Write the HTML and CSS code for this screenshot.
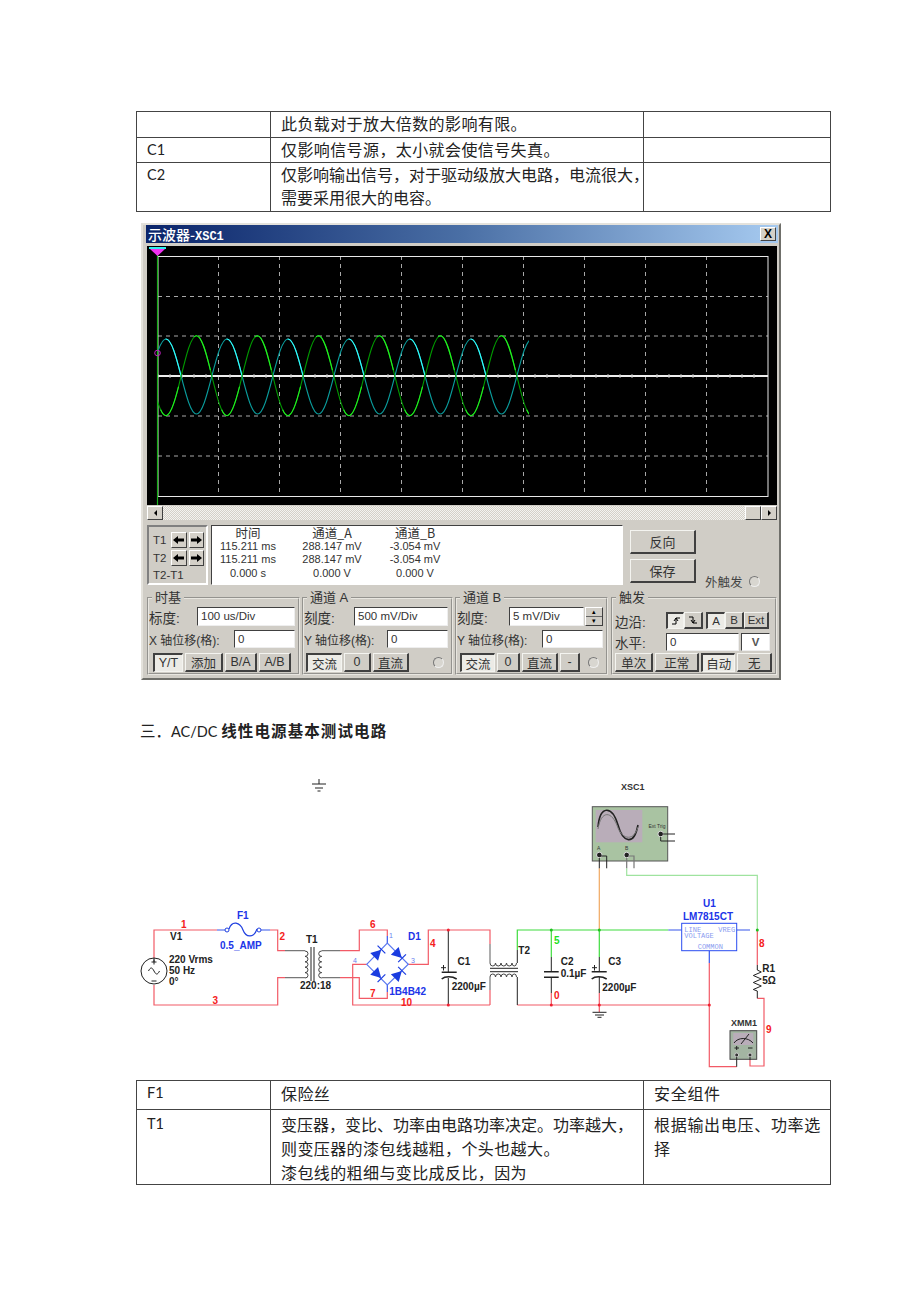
FILE: index.html
```html
<!DOCTYPE html>
<html lang="zh">
<head>
<meta charset="utf-8">
<title>AC/DC</title>
<link rel="stylesheet" href="styles.css">
</head>
<body>
<main class="page">
<table class="doc">
  <colgroup><col class="c1"><col class="c2"><col class="c3"></colgroup>
  <tr><td></td><td>此负载对于放大倍数的影响有限。</td><td></td></tr>
  <tr class="slim"><td class="lat">C1</td><td>仅影响信号源，太小就会使信号失真。</td><td></td></tr>
  <tr><td class="lat">C2</td><td><span class="tight">仅影响输出信号，对于驱动级放大电路，电流很大，</span><br><span class="tight">需要采用很大的电容。</span></td><td></td></tr>
</table>

<section class="scope">
  <div class="title"><span>示波器-<b class="mono">XSC1</b></span><span class="close">X</span></div>
  <svg class="screen" viewBox="147 246 630 259" width="630" height="259">
    <defs>
      <path id="pc" d="M0 0c4.97-19.2 9.73-37.5 15.25-37.5c5.52 0 10.28 18.3 15.25 37.5c4.97 19.2 9.73 37.5 15.25 37.5c5.52 0 10.28-18.3 15.25-37.5"/>
      <path id="pg" d="M0 0c4.97-20.5 9.73-40 15.25-40c5.52 0 10.28 19.5 15.25 40c4.97 20.5 9.73 40 15.25 40c5.52 0 10.28-19.5 15.25-40"/>
      <clipPath id="waveclip"><rect x="158" y="300" width="371" height="150"/></clipPath>
      <g id="cyanrun"><use href="#pc" x="150.75" y="376.5"/><use href="#pc" x="211.75" y="376.5"/><use href="#pc" x="272.75" y="376.5"/><use href="#pc" x="333.75" y="376.5"/><use href="#pc" x="394.75" y="376.5"/><use href="#pc" x="455.75" y="376.5"/><use href="#pc" x="516.75" y="376.5"/></g>
      <g id="greenrun"><use href="#pg" x="120.25" y="375.7"/><use href="#pg" x="181.25" y="375.7"/><use href="#pg" x="242.25" y="375.7"/><use href="#pg" x="303.25" y="375.7"/><use href="#pg" x="364.25" y="375.7"/><use href="#pg" x="425.25" y="375.7"/><use href="#pg" x="486.25" y="375.7"/></g>
    </defs>
    <rect x="147" y="246" width="630" height="259" fill="#000"/>
    <path class="grid" d="M218.5 256V496M279.5 256V496M340.5 256V496M401.5 256V496M462.5 256V496M523.5 256V496M584.5 256V496M645.5 256V496M706.5 256V496M158 296.5H768M158 336H768M158 416H768M158 456H768"/>
    <rect x="158" y="256.5" width="610" height="240" fill="none" stroke="#e8e8e8"/>
    <path d="M158 376H768" stroke="#eee" stroke-width="2"/>
    <path class="ticks" d="M158 374V378M170 374V378M182 374V378M194 374V378M206 374V378M230 374V378M242 374V378M254 374V378M266 374V378M291 374V378M303 374V378M315 374V378M327 374V378M352 374V378M364 374V378M376 374V378M388 374V378M413 374V378M425 374V378M437 374V378M449 374V378M474 374V378M486 374V378M498 374V378M510 374V378M535 374V378M547 374V378M559 374V378M571 374V378M596 374V378M608 374V378M620 374V378M632 374V378M657 374V378M669 374V378M681 374V378M693 374V378M718 374V378M730 374V378M742 374V378M754 374V378"/>
    <g clip-path="url(#waveclip)" fill="none" stroke-width="1.1">
      <use href="#cyanrun" stroke="#0a9c9c"/>
      <use href="#cyanrun" stroke="#33ffff" stroke-dasharray="0 41 41 82"/>
      <use href="#greenrun" stroke="#009a00"/>
      <use href="#greenrun" stroke="#22f022" stroke-dasharray="0 41 41 41 41 0"/>
    </g>
    <path d="M157.5 250V505" stroke="#1bb01b" stroke-width="1.2"/>
    <polygon points="150,249 165,249 157.5,256" fill="#f030f0"/>
    <rect x="149" y="247" width="17" height="2" fill="#30f0f0"/>
    <circle cx="157.5" cy="353" r="2.8" fill="none" stroke="#c020c0"/>
  </svg>
  <div class="hscroll">
    <span class="sbtn"><i class="tri tri-l"></i></span>
    <span class="track"></span>
    <span class="sbtn thumb"></span>
    <span class="sbtn"><i class="tri tri-r"></i></span>
  </div>

  <div class="readrow">
    <div class="tpanel">
      <div class="tline"><span class="tname">T1</span>
        <span class="abtn"><svg width="13" height="10" viewBox="0 0 13 10"><path class="arrow" d="M1 5L6 1V3.500H12V6.500H6V9Z"/></svg></span>
        <span class="abtn"><svg width="13" height="10" viewBox="0 0 13 10"><path class="arrow" d="M12 5L7 1V3.500H1V6.500H7V9Z"/></svg></span>
      </div>
      <div class="tline"><span class="tname">T2</span>
        <span class="abtn"><svg width="13" height="10" viewBox="0 0 13 10"><path class="arrow" d="M1 5L6 1V3.500H12V6.500H6V9Z"/></svg></span>
        <span class="abtn"><svg width="13" height="10" viewBox="0 0 13 10"><path class="arrow" d="M12 5L7 1V3.500H1V6.500H7V9Z"/></svg></span>
      </div>
      <div class="tdiff">T2-T1</div>
    </div>
    <div class="readout">
      <span class="rh">时间</span><span class="rh">通道_A</span><span class="rh">通道_B</span>
      <span>115.211 ms</span><span>288.147 mV</span><span>-3.054 mV</span>
      <span>115.211 ms</span><span>288.147 mV</span><span>-3.054 mV</span>
      <span>0.000 s</span><span>0.000 V</span><span>0.000 V</span>
    </div>
    <div class="side">
      <span class="btn sidebtn">反向</span>
      <span class="btn sidebtn">保存</span>
    </div>
    <div class="ext"><span>外触发</span><i class="radio"></i></div>
  </div>

  <div class="groups">
    <fieldset class="grp g1">
      <legend>时基</legend>
      <div class="row r1"><label>标度:</label><span class="inp w98">100 us/Div</span></div>
      <div class="row r2"><label>X 轴位移(格):</label><span class="inp w61">0</span></div>
      <div class="row r3 in4">
        <span class="btn on w30">Y/T</span><span class="btn w38">添加</span><span class="btn w32">B/A</span><span class="btn w32">A/B</span>
      </div>
    </fieldset>
    <fieldset class="grp g2">
      <legend>通道 A</legend>
      <div class="row r1"><label>刻度:</label><span class="inp w94">500 mV/Div</span></div>
      <div class="row r2"><label>Y 轴位移(格):</label><span class="inp w61">0</span></div>
      <div class="row r3 in2">
        <span class="btn on w36">交流</span><span class="btn w27">0</span><span class="btn w36">直流</span><i class="radio push"></i>
      </div>
    </fieldset>
    <fieldset class="grp g3">
      <legend>通道 B</legend>
      <div class="row r1"><label>刻度:</label><span class="inp w75 push">5 mV/Div</span><span class="spin"><b>▴</b><b>▾</b></span></div>
      <div class="row r2"><label>Y 轴位移(格):</label><span class="inp w61">0</span></div>
      <div class="row r3 in3">
        <span class="btn on w35">交流</span><span class="btn w23">0</span><span class="btn w36">直流</span><span class="btn w20">-</span><i class="radio push"></i>
      </div>
    </fieldset>
    <fieldset class="grp g4">
      <legend>触发</legend>
      <div class="row r1 r1b"><label>边沿:</label>
        <span class="btn on small w18 first"><svg width="10" height="10" viewBox="0 0 10 10"><path class="edge" d="M1 8H5V2H9M3 5L5 2L7 5"/></svg></span>
        <span class="btn small w19"><svg width="10" height="10" viewBox="0 0 10 10"><path class="edge" d="M1 2H5V8H9M3 5L5 8L7 5"/></svg></span>
        <span class="btn on small w19 sp">A</span><span class="btn small w19">B</span><span class="btn small w25">Ext</span>
      </div>
      <div class="row r2 r2b"><label>水平:</label><span class="inp w73 first">0</span><span class="inp w29 unit">V</span></div>
      <div class="row r3 in1">
        <span class="btn w39">单次</span><span class="btn w44">正常</span><span class="btn on w35">自动</span><span class="btn w35">无</span>
      </div>
    </fieldset>
  </div>
</section>

<h2 class="head">三．<span class="hl">AC/DC </span><b>线性电源基本测试电路</b></h2>

<svg class="circuit" viewBox="136 770 650 305" width="650" height="305">
  <defs>
    <g id="diode"><polygon points="-5,-5.5 5,0 -5,5.5" fill="#1a3ce0"/><path d="M5.3-5.5V5.5" stroke="#1a3ce0" stroke-width="1.2"/></g>
  </defs>
  <!-- ground, free-floating -->
  <path class="k" d="M319 779V784M312 784H326M315 788H323M317.5 791H320.5"/>

  <!-- red wires -->
  <path class="w-red" d="M154 958V930H217M270 930H277.7V950.7H285M154 985V1005H277.7V977.7H285M340 950.7H359.3V930H387.3V936M340 977.7H359.3V998.3H387.3V992M366.7 964.3H352.7V1005H490M408.3 964.3H428.3V930H490V944M490 990V1005M517.3 1005H709.3M551.3 993V1005M599.3 993V1012M709.3 963V1066.7H736.7M757.3 930V965M757.3 998.3H764V1066H750V1060"/>
  <!-- green wires -->
  <path class="w-green" d="M517.3 950V930H668.3M551.3 930V957M599.3 930V957"/>
  <path class="w-lg" d="M626.7 868.3V875.3H757.3V930"/>
  <path class="w-or" d="M599.3 868.3V930"/>
  <!-- blue wires -->
  <path class="w-blue" d="M217 930H227M259 930H270M668.3 930H681.7M736.7 930H750M709.3 950.7V963M387.3 936V943M387.3 992V985"/>
  <path class="w-lb" d="M366.7 964.3L387.3 943L408.3 964.3L387.3 985Z"/>
  <!-- grey / black leads -->
  <path class="w-gr" d="M285 950.7H305M285 977.7H305M321.7 950.7H340M321.7 977.7H340M490 944V963M490 977V990"/>
  <path class="k" d="M517.3 963V950M517.3 977V1005M551.3 957V971.7M551.3 977.3V993M599.3 957V971.7M599.3 977V993M448.3 930V972M448.3 978V1005"/>

  <!-- V1 -->
  <circle class="k" cx="154" cy="971" r="13"/>
  <path class="k" d="M148.5 971c2-4 3.5-4 5.5 0s3.500 4 5.500 0M154 958V962M151.500 962H156.500M154 959.500V964.500M151.500 981H156.500"/>

  <!-- fuse -->
  <circle class="b-o" cx="227" cy="930" r="2"/><circle class="b-o" cx="259" cy="930" r="2"/>
  <path class="b-l" d="M229 929C232 920 240 922 243 930C246 938 254 938 257 929"/>

  <!-- T1 -->
  <path class="coil" d="M305 951a3 2.700 0 0 1 0 5.400a3 2.700 0 0 1 0 5.400a3 2.700 0 0 1 0 5.400a3 2.700 0 0 1 0 5.400a3 2.700 0 0 1 0 5.400"/>
  <path class="coil" d="M321.700 951a3 2.700 0 0 0 0 5.400a3 2.700 0 0 0 0 5.400a3 2.700 0 0 0 0 5.400a3 2.700 0 0 0 0 5.400a3 2.700 0 0 0 0 5.400"/>
  <path class="k" d="M311 947V981M314 947V981"/>

  <!-- bridge -->
  <use href="#diode" transform="translate(377.700 953.300) rotate(-45)"/>
  <use href="#diode" transform="translate(398.300 954.500) rotate(45)"/>
  <use href="#diode" transform="translate(377.700 974.500) rotate(45)"/>
  <use href="#diode" transform="translate(398.300 974.500) rotate(-45)"/>

  <!-- C1 -->
  <path class="k2" d="M441.700 972.300H456.700M441.700 979C445 976 452 976 456.700 979"/>
  <path class="k" d="M441 967.700H446M443.500 965V970.500"/>
  <!-- T2 -->
  <path class="coil" d="M490 963a2.750 3 0 0 0 5.500 0a2.750 3 0 0 0 5.500 0a2.750 3 0 0 0 5.500 0a2.750 3 0 0 0 5.500 0a2.250 3 0 0 0 4.500 0"/>
  <path class="coil" d="M490 977a2.750 3 0 0 1 5.500 0a2.750 3 0 0 1 5.500 0a2.750 3 0 0 1 5.500 0a2.750 3 0 0 1 5.500 0a2.250 3 0 0 1 4.500 0"/>
  <path class="k" d="M490 968.300H518M490 971.700H518"/>
  <!-- C2 -->
  <path class="k2" d="M544 971.700H558.700M544 977.300H558.700"/>
  <!-- C3 -->
  <path class="k2" d="M591.700 971.700H606.700M591.700 979C595 976 602 976 606.700 979"/>
  <path class="k" d="M592 967.700H597M594.500 965V970.500"/>
  <!-- ground -->
  <path class="k" d="M592.500 1012.300H606.500M595 1015H604M597.500 1017.300H601.500"/>

  <!-- dots -->
  <g class="d-red"><circle cx="448.300" cy="930" r="1.500"/><circle cx="448.300" cy="1005" r="1.500"/><circle cx="551.300" cy="1005" r="1.500"/><circle cx="599.300" cy="1005" r="1.500"/><circle cx="709.300" cy="1005" r="1.500"/></g>
  <g class="d-green"><circle cx="551.300" cy="930" r="1.500"/><circle cx="599.300" cy="930" r="1.500"/><circle cx="757.300" cy="930" r="1.500"/></g>

  <!-- U1 -->
  <rect x="681.700" y="923.300" width="55" height="27.400" fill="#fff" stroke="#2a4cf0"/>
  <!-- R1 -->
  <path class="k" d="M757.300 965V970l4 2l-8 3.500l8 3.500l-8 3.500l8 3.500l-8 3.500l4 1.500V998.300"/>

  <!-- XSC1 -->
  <rect x="592.300" y="806.700" width="75.400" height="54.300" fill="#a9c3a2" stroke="#555"/>
  <rect x="595.700" y="810" width="46.600" height="32.300" fill="#b9adb9"/>
  <path class="k2" d="M598 827C600 805 612 805 618 825C623 843 634 846 638 825"/>
  <path class="w-thin" d="M598 829C601 810 612 810 618 828C623 840 634 841 638 827"/>
  <circle cx="599.300" cy="855" r="2.800" fill="#222" stroke="#ddd"/>
  <circle cx="626.700" cy="855" r="2.800" fill="#222" stroke="#ddd"/>
  <circle cx="660.700" cy="834" r="2.800" fill="#222" stroke="#ddd"/>
  <path class="k" d="M599.300 858V868.300M601 856H606.700V868.300M663 834H675M660.700 837V841H675"/>
  <path class="w-gr" d="M628 856H634V868.300M626.700 858V868.300"/>

  <!-- XMM1 -->
  <rect x="730" y="1030.700" width="26.700" height="28.600" fill="#a3b5a2" stroke="#444"/>
  <rect x="733.300" y="1033" width="20" height="12" fill="#b9adb9"/>
  <path class="k" d="M734 1043C738 1037 748 1037 753 1043M741 1044L749 1034"/>
  <path class="k" d="M734.500 1048H739M736.700 1046V1050M748 1048H752.500"/>
  <circle cx="736.700" cy="1055" r="2" fill="#333" stroke="#ccc"/>
  <circle cx="750" cy="1055" r="2" fill="#333" stroke="#ccc"/>
  <path class="k" d="M736.700 1057V1066.700M750 1057V1060"/>

  <!-- labels -->
  <g class="lbl red">
    <text x="181" y="928">1</text><text x="279.500" y="940">2</text><text x="212.500" y="1004">3</text>
    <text x="430" y="947">4</text><text x="370" y="928">6</text><text x="370" y="997">7</text>
    <text x="401" y="1006">10</text><text x="554" y="998.500">0</text><text x="759" y="947">8</text><text x="766" y="1032.500">9</text>
  </g>
  <g class="lbl green"><text x="554" y="943.500">5</text></g>
  <g class="lbl blue">
    <text x="237" y="919">F1</text><text x="220" y="949">0.5_AMP</text><text x="408" y="940">D1</text>
    <text x="389.300" y="995">1B4B42</text><text x="703" y="907">U1</text><text x="683" y="919.500">LM7815CT</text>
  </g>
  <g class="lbl">
    <text x="170" y="940">V1</text><text x="306" y="943">T1</text><text x="169" y="962.700">220 Vrms</text>
    <text x="169" y="974">50 Hz</text><text x="169" y="985">0°</text><text x="300" y="989">220:18</text>
    <text x="457.500" y="965">C1</text><text x="451.700" y="990">2200µF</text><text x="518.300" y="953.500">T2</text>
    <text x="560.700" y="965">C2</text><text x="560.700" y="977.300">0.1µF</text><text x="608.300" y="965">C3</text>
    <text x="602.300" y="991">2200µF</text><text x="762.300" y="971.700">R1</text><text x="762.300" y="984">5Ω</text>
  </g>
  <g class="lbl-s">
    <text x="621" y="790">XSC1</text><text x="731" y="1026">XMM1</text>
  </g>
  <g class="pin"><text x="389" y="938">1</text><text x="353" y="963">4</text><text x="411" y="963">3</text></g>
  <g class="u1"><text x="684.300" y="931.700">LINE</text><text x="684.300" y="938">VOLTAGE</text><text x="718.300" y="931.700">VREG</text><text x="697.700" y="949">COMMON</text></g>
  <g class="tiny"><text x="597" y="850">A</text><text x="625" y="850">B</text><text x="648.500" y="828">Ext Trig</text></g>
</svg>

<table class="doc doc2">
  <colgroup><col class="c1"><col class="c2"><col class="c3"></colgroup>
  <tr class="tall"><td class="lat">F1</td><td>保险丝</td><td class="wide">安全组件</td></tr>
  <tr class="body"><td class="lat">T1</td><td><span class="tight">变压器，变比、功率由电路功率决定。功率越大，</span><br>则变压器的漆包线越粗，个头也越大。<br>漆包线的粗细与变比成反比，因为</td><td class="wide">根据输出电压、功率选择</td></tr>
</table>
</main>
</body>
</html>
```
FILE: styles.css
```css
* { box-sizing: border-box; }
html, body { margin: 0; background: #fff; }
.page {
  width: 920px;
  height: 1302px;
  padding: 111px 0 0 136px;
  overflow: hidden;
  font-family: "Noto Sans CJK SC", sans-serif;
  color: #222;
}

/* document tables */
.doc {
  width: 694px;
  table-layout: fixed;
  border-collapse: collapse;
  font-size: 16px;
  letter-spacing: .4px;
  line-height: 23px;
}
.doc td {
  border: 1px solid #444;
  padding: 0 2px 2px 10px;
  vertical-align: top;
}
.doc .slim td { padding-bottom: 1px; }
.c1 { width: 134px; }
.c2 { width: 373px; }
.c3 { width: 187px; }
.lat { font-family: "Lato", "Liberation Sans", sans-serif; font-size: 14.500px; letter-spacing: 0; }
.tight { letter-spacing: 0; white-space: nowrap; }
.wide { letter-spacing: .7px; }
.doc2 { line-height: 24px; margin-top: 5px; }
.doc2 .tall td { padding-top: 0; padding-bottom: 4px; }
.doc2 .body td { padding-top: 2px; padding-bottom: 0; }

/* oscilloscope window */
.scope {
  width: 640px;
  height: 457px;
  margin: 11px 0 0 5px;
  padding: 0 2px 0 4px;
  display: flex;
  flex-direction: column;
  background: #d0cdc6;
  border: 2px solid;
  border-color: #e4e2dc #6f6f6a #6f6f6a #e4e2dc;
  font-family: "Liberation Sans", "Noto Sans CJK SC", sans-serif;
  font-size: 12px;
  color: #222;
}
.title {
  flex: none;
  height: 18px;
  margin: 0 -1px 3px -1px;
  padding: 0 2px 0 2px;
  display: flex;
  align-items: center;
  justify-content: space-between;
  background: linear-gradient(90deg, #0a246a, #4a6fa5 50%, #a6caf0);
  color: #fff;
  font-family: "Noto Sans CJK SC", sans-serif;
  font-size: 14px;
  font-weight: 500;
}
.mono { font-family: "Liberation Mono", monospace; font-size: 12px; font-weight: 700; }
.close {
  width: 16px;
  height: 14px;
  background: #d4d0c8;
  color: #000;
  border: 1px solid;
  border-color: #fff #444 #444 #fff;
  font: 700 12px/12px "Liberation Sans", sans-serif;
  text-align: center;
}
.screen { display: block; flex: none; }
.grid { fill: none; stroke: #a8a8a8; stroke-dasharray: 4 4; }
.ticks { fill: none; stroke: #bbb; }

.hscroll {
  flex: none;
  height: 15px;
  display: flex;
  padding-top: 1px;
}
.track { flex: 1; background: repeating-conic-gradient(#f4f3f0 0 25%, #d4d0c8 0 50%) 0 0 / 2px 2px; }
.sbtn {
  width: 16px;
  display: flex;
  align-items: center;
  justify-content: center;
  background: #d4d0c8;
  border: 1px solid;
  border-color: #fff #404040 #404040 #fff;
}
.tri { width: 0; height: 0; border: 3px solid transparent; }
.tri-l { border-right-color: #000; border-left-width: 0; }
.tri-r { border-left-color: #000; border-right-width: 0; }

.readrow {
  flex: none;
  height: 60px;
  margin-top: 5px;
  display: flex;
}
.tpanel {
  width: 61px;
  padding: 4px 0 0 4px;
  border: 2px solid;
  border-color: #808080 #fff #fff #808080;
  font-size: 11.5px;
  line-height: 14px;
  color: #333;
}
.tline { display: flex; align-items: center; height: 18px; }
.tname { width: 19px; }
.abtn {
  width: 16px;
  height: 16px;
  margin-right: 2px;
  display: flex;
  align-items: center;
  justify-content: center;
  background: #d4d0c8;
  border: 1px solid;
  border-color: #fff #404040 #404040 #fff;
}
.arrow { fill: #000; stroke: none; }
.tdiff { margin-top: 1px; }
.readout {
  width: 412px;
  margin-left: 3px;
  padding: 0;
  display: grid;
  grid-template-columns: 72px 96px 70px;
  grid-auto-rows: 13.500px;
  justify-content: start;
  background: #fff;
  border: 1px solid;
  border-color: #404040 #fff #fff #404040;
  font-size: 11px;
  line-height: 13.500px;
  text-align: center;
  white-space: nowrap;
  color: #333;
}
.rh { font-size: 12.500px; font-family: "Noto Sans CJK SC", sans-serif; line-height: 14px; }
.side {
  width: 66px;
  margin: 5px 0 0 7px;
  display: flex;
  flex-direction: column;
  gap: 5px;
}
.ext {
  margin: 48px 0 0 9px;
  display: flex;
  align-items: center;
  gap: 6px;
  height: 16px;
  font-size: 12.500px;
  color: #444;
}
.radio {
  display: block;
  flex: none;
  width: 11px;
  height: 11px;
  border-radius: 50%;
  border: 1px solid;
  border-color: #777 #eee #eee #777;
  background: #d8d6d0;
}

.btn {
  display: flex;
  align-items: center;
  justify-content: center;
  height: 19px;
  background: #d0cdc6;
  border: 1px solid;
  border-color: #f4f4f0 #404040 #404040 #f4f4f0;
  border-width: 1px 2px 2px 1px;
  font-size: 12.500px;
  color: #333;
}
.btn.on {
  background: #ecebe6;
  border-color: #404040 #f4f4f0 #f4f4f0 #404040;
  border-width: 2px 1px 1px 2px;
}
.btn.sidebtn { height: 24px; flex: none; font-size: 13px; }

.groups { flex: none; display: flex; margin-top: 6px; height: 84px; }
.grp {
  margin: 0;
  padding: 2px 3px 0 0;
  height: 84px;
  border: 2px groove #e8e6e0;
  min-width: 0;
}
.grp legend { margin-left: 3px; padding: 0 3px; height: 14px; font-size: 13px; line-height: 14px; color: #333; }
.g1 { width: 153px; }
.g2 { width: 151px; margin-left: 2px; }
.g3 { width: 153px; margin-left: 2px; }
.g4 { width: 166px; margin-left: 3px; }
.row { display: flex; align-items: center; }
.row label { flex: 1; white-space: nowrap; color: #333; font-size: 12px; }
.r1 label, .r2b label { font-size: 13.500px; }
.r1 { height: 19px; }
.r2 { height: 18px; margin-top: 4px; }
.r3 { height: 19px; margin-top: 5px; gap: 2px; }
.in1 { padding-left: 2px; }
.in2 { padding-left: 2px; }
.in3 { padding-left: 3px; }
.in4 { padding-left: 4px; }
.inp {
  display: block;
  height: 100%;
  padding-left: 3px;
  background: #fff;
  border: 1px solid;
  border-color: #404040 #eee #eee #404040;
  font-size: 11.500px;
  line-height: 16px;
  color: #333;
}
.push { margin-left: auto; }
.spin {
  width: 18px;
  height: 19px;
  margin-left: 1px;
  display: flex;
  flex-direction: column;
  font-size: 7px;
  line-height: 8px;
  text-align: center;
  border: 1px solid;
  border-color: #fff #404040 #404040 #fff;
}
.spin b { flex: 1; font-weight: 400; color: #000; }
.spin b + b { border-top: 1px solid #666; }
.g3 .row.r1 label { flex: 0 0 auto; }
.g3 .inp.w75 { margin-right: 0; }
.radio.push { margin-right: 4px; }
.r1b { height: 17px; margin-top: 5px; padding-left: 2px; }
.r2b { margin-top: 4px; padding-left: 2px; }
.r1b label, .r2b label { flex: none; width: 51px; }
.btn.small { height: 17px; font-size: 11.500px; }
.edge { fill: none; stroke: #000; }
.sp { margin-left: 3px; }
.unit { margin-left: 2px; text-align: center; padding: 0; font-weight: 700; color: #555; }
.g4 .r1b .btn { flex: none; }
.g4 .r3 { margin-top: 2px; }
.w18 { width: 18px; } .w19 { width: 19px; } .w20 { width: 20px; } .w23 { width: 23px; }
.w25 { width: 25px; } .w27 { width: 27px; } .w29 { width: 29px; } .w30 { width: 30px; }
.w32 { width: 32px; } .w35 { width: 35px; } .w36 { width: 36px; } .w38 { width: 38px; }
.w39 { width: 39px; } .w44 { width: 44px; } .w61 { width: 61px; flex: none; } .w73 { width: 73px; flex: none; }
.w75 { width: 75px; flex: none; } .w94 { width: 94px; flex: none; } .w98 { width: 98px; flex: none; }

/* heading */
.head {
  margin: 40px 0 0 4px;
  height: 20px;
  font-size: 15.500px;
  line-height: 20px;
  font-weight: 400;
  font-family: "Noto Sans CJK SC", sans-serif;
  color: #222;
}
.hl { font-family: "Lato", sans-serif; font-size: 14.500px; }
.head b { font-weight: 700; font-size: 15.500px; letter-spacing: 1.100px; }

/* schematic */
.circuit { display: block; margin-top: 30px; }
.circuit path, .circuit polygon { stroke-linejoin: miter; }
.w-red, .w-green, .w-lg, .w-or, .w-blue, .w-lb, .w-gr, .k, .k2, .coil, .b-l, .b-o, .w-thin { fill: none; }
.w-red { stroke: #f25a66; stroke-width: 1.200; }
.w-green { stroke: #3fdc3f; stroke-width: 1.200; }
.w-lg { stroke: #9fe39f; stroke-width: 1.200; }
.w-or { stroke: #f0a860; stroke-width: 1.200; }
.w-blue { stroke: #3656ea; stroke-width: 1.200; }
.w-lb { stroke: #5a78f0; stroke-width: 1.200; }
.w-gr { stroke: #777; stroke-width: 1.200; }
.k { stroke: #222; stroke-width: 1; }
.k2 { stroke: #222; stroke-width: 1.600; }
.coil { stroke: #444; stroke-width: 1; }
.b-l { stroke: #2040e0; stroke-width: 1.200; }
.b-o { stroke: #2040e0; stroke-width: 1; fill: #fff; }
.w-thin { stroke: #777; stroke-width: 1; }
.d-red { fill: #f02030; }
.d-green { fill: #20c020; }
.lbl text { font: 700 10px "Liberation Sans", sans-serif; fill: #222; }
.lbl.red text { fill: #f52020; }
.lbl.green text { fill: #22e022; }
.lbl.blue text { fill: #2034e8; }
.lbl-s text { font: 700 9px "Liberation Sans", sans-serif; fill: #333; }
.pin text { font: 7px "Liberation Sans", sans-serif; fill: #6a80f0; }
.u1 text { font: 7px "Liberation Mono", monospace; fill: #8a9cf0; }
.tiny text { font: 5px "Liberation Sans", sans-serif; fill: #333; }
```
